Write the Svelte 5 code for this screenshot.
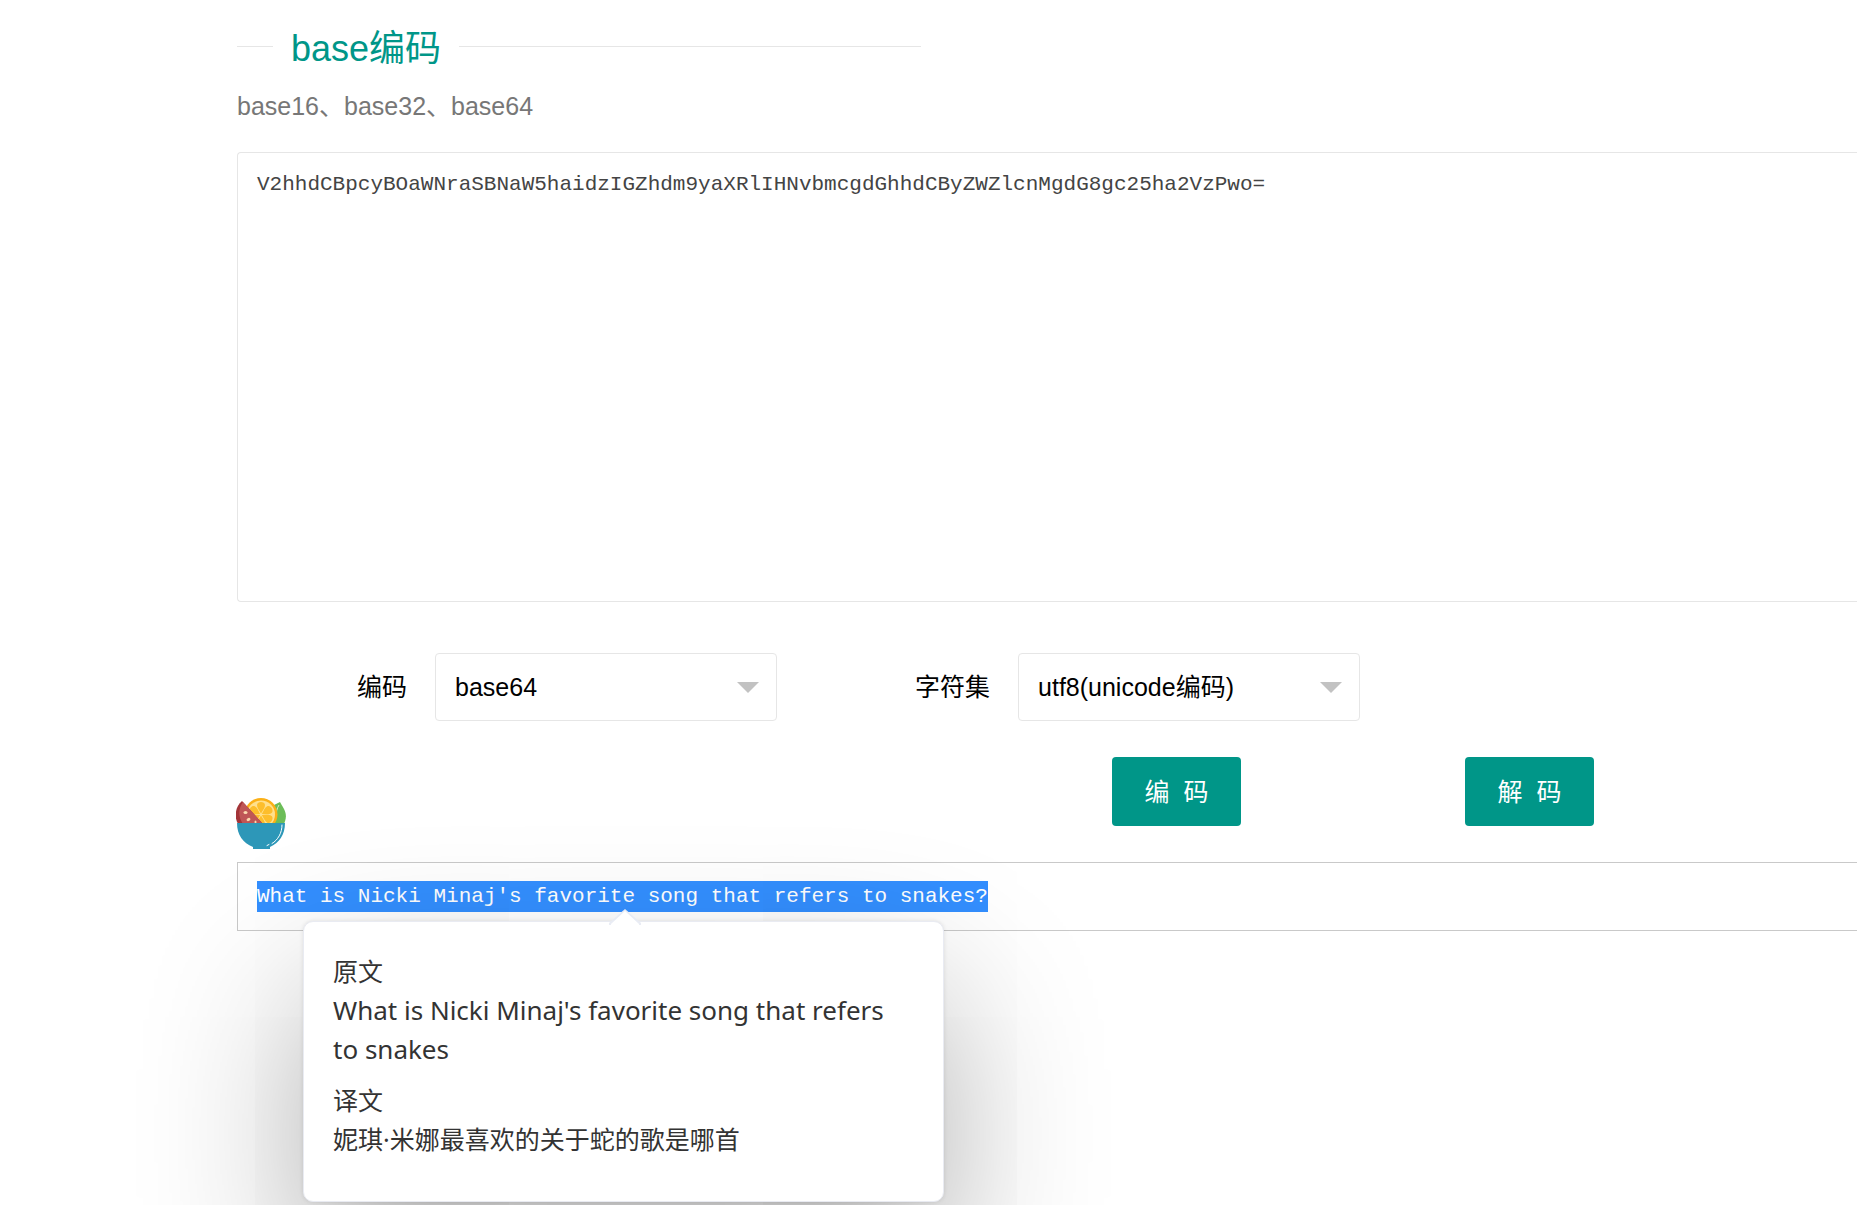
<script>
  let source = $state('V2hhdCBpcyBOaWNraSBNaW5haidzIGZhdm9yaXRlIHNvbmcgdGhhdCByZWZlcnMgdG8gc25ha2VzPwo=');
  let encoding = $state('base64');
  let charset = $state('utf8');
  const result = "What is Nicki Minaj's favorite song that refers to snakes?";
  const petals = [0, 60, 120, 180, 240, 300];
</script>

<main>
  <fieldset class="title">
    <legend>base编码</legend>
  </fieldset>
  <p class="intro">base16、base32、base64</p>

  <textarea class="source" aria-label="base编码" spellcheck="false" bind:value={source}></textarea>

  <div class="options">
    <div class="field">
      <label for="encoding">编码</label>
      <div class="select">
        <select id="encoding" bind:value={encoding}>
          <option value="base16">base16</option>
          <option value="base32">base32</option>
          <option value="base64">base64</option>
        </select>
      </div>
    </div>
    <div class="field">
      <label for="charset">字符集</label>
      <div class="select">
        <select id="charset" bind:value={charset}>
          <option value="utf8">utf8(unicode编码)</option>
        </select>
      </div>
    </div>
  </div>

  <div class="actions">
    <svg class="bowl" viewBox="1 0 50 52" aria-hidden="true">
      <path d="M37 26 L39 7 L45 4 L49 11 C52 17 51 21 49 26 Z" fill="#6cbd58" />
      <path d="M41 20 C41 14 42 10 44 7" stroke="#d9efc4" stroke-width="1" fill="none" />
      <circle cx="26" cy="16.500" r="16.500" fill="#fbb017" />
      <circle cx="26" cy="16.500" r="14" fill="#ffe08c" />
      <g fill="#fdbe2c">
        {#each petals as angle}
          <path
            d="M26 15.500 C24 12 22 10 22 7 C22 3 30 3 30 7 C30 10 28 12 26 15.500 Z"
            transform="rotate({angle} 26 16.5)"
          />
        {/each}
      </g>
      <path d="M7 3 C0 9 -1 19 3 26 L28 26 Z" fill="#a33438" />
      <path d="M8 4 C3 11 3 19 8 26 L28 26 Z" fill="#bf5656" />
      <g fill="#fbd9ae">
        <ellipse cx="10.500" cy="14.500" rx="2" ry="1.500" />
        <ellipse cx="13.500" cy="21.500" rx="2" ry="1.500" transform="rotate(-30 13.5 21.5)" />
        <ellipse cx="20.500" cy="24" rx="1" ry="1.500" />
      </g>
      <path d="M2 25 H50 C50 37 44 45 35 49 V51 H18 V49 C8 45 2 37 2 25 Z" fill="#2d97b8" />
      <path d="M47 27 C47 35 43 42 37 45.500" stroke="#fff" stroke-width="1" fill="none" stroke-linecap="round" />
      <path d="M32 47.500 L34 46.500" stroke="#fff" stroke-width="1" stroke-linecap="round" />
    </svg>
    <div class="buttons">
      <button type="button">编&nbsp;&nbsp;码</button>
      <button type="button">解&nbsp;&nbsp;码</button>
    </div>
  </div>

  <div class="result">
    <output><mark>{result}</mark></output>
    <aside class="popup">
      <svg class="tip" viewBox="0 0 32 16" aria-hidden="true">
        <path d="M0 14 L16 0 L32 14 V16 H0 Z" fill="#e9ecf4" />
        <path d="M2 15 L16 2 L30 15 V16 H2 Z" fill="#fff" />
      </svg>
      <section>
        <h2>原文</h2>
        <p lang="en">What is Nicki Minaj's favorite song that refers to snakes</p>
      </section>
      <section>
        <h2>译文</h2>
        <p>妮琪·米娜最喜欢的关于蛇的歌是哪首</p>
      </section>
    </aside>
  </div>
</main>

<style>
  :global(body) {
    margin: 0;
    background: #fff;
  }

  main {
    box-sizing: border-box;
    min-height: 100vh;
    padding: 25px 0 0 237px;
    color: #000;
    font: 25px/36px 'Liberation Sans', 'Noto Sans CJK SC', sans-serif;
  }

  .title {
    max-width: 684px;
    box-sizing: border-box;
    margin: 0;
    padding: 0;
    border: 0;
    border-top: 1px solid #e6e6e6;
  }

  legend {
    margin-left: 36px;
    padding: 6px 18px 0;
    color: #009688;
    font-size: 36px;
    line-height: 36px;
  }

  .intro {
    margin: 21px 0 28px;
    color: #777;
  }

  .source {
    display: block;
    box-sizing: border-box;
    width: 100%;
    height: 450px;
    padding: 17px 19px;
    border: 1px solid #e6e6e6;
    border-right: 0;
    border-radius: 4px 0 0 4px;
    outline: 0;
    resize: none;
    background: #fff;
    color: #444;
    font: 21px/30px 'Liberation Mono', monospace;
  }

  .options {
    display: flex;
    gap: 138px;
    padding: 51px 0 36px 120px;
  }

  .field {
    display: flex;
    align-items: center;
    gap: 28px;
  }

  .select {
    position: relative;
    width: 342px;
  }

  .select::after {
    content: '';
    position: absolute;
    top: 29px;
    right: 18px;
    border: 11px solid transparent;
    border-top-color: #c2c2c2;
    border-bottom-width: 0;
    pointer-events: none;
  }

  select {
    appearance: none;
    display: block;
    box-sizing: border-box;
    width: 100%;
    height: 68px;
    padding: 0 19px;
    border: 1px solid #e6e6e6;
    border-radius: 4px;
    background: #fff;
    color: #000;
    font: inherit;
  }

  .actions {
    display: flex;
    align-items: flex-end;
    justify-content: space-between;
    height: 93px;
    margin-bottom: 12px;
    padding-right: 263px;
  }

  .bowl {
    width: 50px;
    height: 52px;
    margin-left: -1px;
  }

  .buttons {
    display: flex;
    align-self: flex-start;
    gap: 224px;
  }

  button {
    min-width: 129px;
    height: 69px;
    padding: 0 32px;
    border: 0;
    border-radius: 4px;
    background: #009688;
    color: #fff;
    font: inherit;
  }

  .result {
    position: relative;
  }

  output {
    display: block;
    padding: 18px 19px;
    border: 1px solid #c9c9c9;
    border-right: 0;
    font: 21px/31px 'Liberation Mono', monospace;
  }

  mark {
    display: inline-block;
    background: #338fff;
    color: #fff;
  }

  .popup {
    position: absolute;
    top: 59px;
    left: 66px;
    box-sizing: border-box;
    width: 641px;
    padding: 30px 42px 42px 29px;
    border: 1px solid #e9ebf2;
    border-radius: 10px;
    background: #fff;
    box-shadow: 0 72px 160px rgba(0, 0, 0, 0.32), 0 0 4px rgba(0, 0, 0, 0.1);
    color: #333;
    font: 25px/39px 'Noto Sans', 'Noto Sans CJK SC', sans-serif;
  }

  .tip {
    position: absolute;
    top: -13px;
    left: 305px;
    width: 32px;
    height: 16px;
  }

  h2,
  .popup p {
    margin: 0;
    font-size: 25px;
    font-weight: 400;
  }

  .popup p:lang(en) {
    font-size: 26px;
  }

  section + section {
    margin-top: 12px;
  }
</style>
